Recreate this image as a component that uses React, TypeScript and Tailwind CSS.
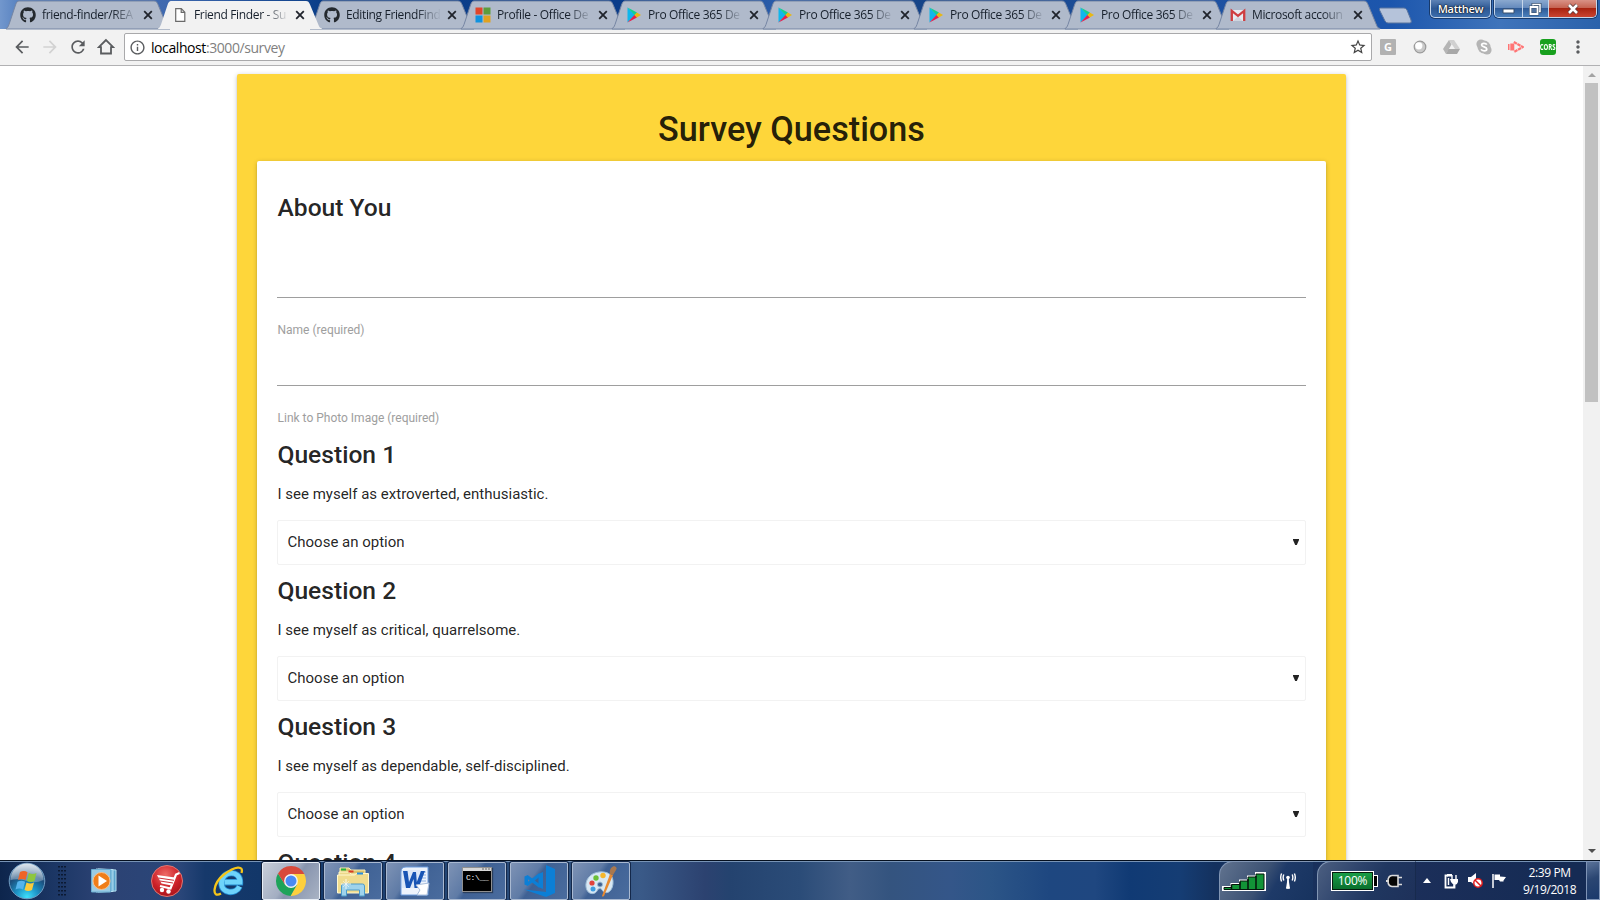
import { FaGithub } from "react-icons/fa";
import { MdArrowBack, MdArrowForward, MdRefresh, MdInfoOutline, MdStarBorder, MdMoreVert } from "react-icons/md";

type TabKind = "github" | "page" | "office" | "play" | "gmail";

type TabData = { kind: TabKind; title: string; active?: boolean; wide?: boolean };

const tabs: TabData[] = [
  { kind: "github", title: "friend-finder/REA", wide: true },
  { kind: "page", title: "Friend Finder - Su", active: true, wide: true },
  { kind: "github", title: "Editing FriendFind" },
  { kind: "office", title: "Profile - Office De" },
  { kind: "play", title: "Pro Office 365 De" },
  { kind: "play", title: "Pro Office 365 De" },
  { kind: "play", title: "Pro Office 365 De" },
  { kind: "play", title: "Pro Office 365 De" },
  { kind: "gmail", title: "Microsoft accoun" },
];

const questions = [
  "I see myself as extroverted, enthusiastic.",
  "I see myself as critical, quarrelsome.",
  "I see myself as dependable, self-disciplined.",
  "I see myself as anxious, easily upset.",
];

function Favicon({ kind }: { kind: TabKind }) {
  if (kind === "github") return <FaGithub className="size-4 shrink-0 text-[#24292e]" />;
  if (kind === "page")
    return (
      <svg viewBox="0 0 16 16" className="size-4 shrink-0">
        <path d="M3.7 1.7h5.6l3.5 3.5v9.1H3.7z M9.2 1.7v3.6h3.6" fill="#fff" stroke="#6a6a6a" strokeWidth="1.2" />
      </svg>
    );
  if (kind === "office")
    return (
      <svg viewBox="0 0 16 16" className="size-4 shrink-0">
        <path d="M.5.5h7v7h-7z" fill="#e0452a" />
        <path d="M8.5.5h7v7h-7z" fill="#5d9c3b" />
        <path d="M.5 8.5h7v7h-7z" fill="#1092df" />
        <path d="M8.5 8.5h7v7h-7z" fill="#e0a220" />
      </svg>
    );
  if (kind === "play")
    return (
      <svg viewBox="0 0 16 16" className="size-4 shrink-0">
        <path d="M1.5.5v15L9 8z" fill="#10b6ec" />
        <path d="M1.5.5 11 5.6 8.6 8.2z" fill="#12cf91" />
        <path d="M1.5 15.5 11 10.4 8.6 7.8z" fill="#e6204e" />
        <path d="M10.8 5.4 15 8l-4.2 2.6L8.4 8z" fill="#e8b813" />
      </svg>
    );
  return (
    <svg viewBox="0 0 16 16" className="size-4 shrink-0">
      <path d="M2 3h12v11H2z" fill="#e8ebf0" />
      <path d="M3 14 8 9.5 13 14z" fill="#cfd5de" />
      <path d="M1.8 14V3.8L8 8.8l6.200-5V14" fill="none" stroke="#cf3e40" strokeWidth="2.3" />
    </svg>
  );
}

function Tab({ kind, title, active, wide }: TabData) {
  return (
    <div className={`relative h-[29px] shrink-0 ${active ? "z-10" : ""} ${wide ? "w-[152px]" : "w-[151px]"}`}>
      <svg className="absolute left-0 top-0 h-[29px] w-[164px] overflow-visible" viewBox="0 0 164 29">
        <path
          d="M0 28.500C1.500 28 2 27 3 24.500L9.500 5C10.500 2 11.500 1 13 1H148C150 1 151 2 152 4.500L160.500 25C161.500 27.500 162 28 164 28.500V29H0z"
          fill={active ? "#f2f2f2" : "#b0bacb"}
          stroke={active ? "none" : "#7585a3"}
          strokeWidth="1"
        />
      </svg>
      <div className="relative flex h-[29px] items-center pl-[14px]">
        <Favicon kind={kind} />
        <div className="ml-[6px] w-[95px] whitespace-nowrap text-[12px] tracking-[-0.35px] text-[#17202c] mask-[linear-gradient(to_right,black_74%,transparent_100%)]">
          {title}
        </div>
        <svg viewBox="0 0 10 10" className="ml-[6px] size-[10px]">
          <path d="M1.200 1.200l7.600 7.600M8.800 1.200 1.200 8.800" stroke="#20242c" strokeWidth="1.800" />
        </svg>
      </div>
    </div>
  );
}

function TabStrip() {
  return (
    <div className="flex h-[29px] shrink-0 bg-[linear-gradient(90deg,#7297cd_0px,#5580bf_20px,#3f69af_165px,#0c3f89_320px,#093c8a_620px,#2b5daa_780px,#154488_920px,#1e51a0_1200px,#1c56ad_1390px,#3f74bb_1500px,#2a62ab_1600px)] pl-[6px]">
      {tabs.map((t, i) => (
        <Tab key={i} {...t} />
      ))}
      <svg className="ml-[11px] mt-[7px] h-[17px] w-[34px]" viewBox="0 0 34 17">
        <path d="M2.500 1H26q2 0 3 2l4 10q1 3-1 3H10q-2 0-3-2L1.500 3Q1 1 2.500 1z" fill="#b5c3da" stroke="#59749f" />
      </svg>
      <div className="ml-[18px] flex items-start">
        <div className="flex h-[18px] w-[61px] items-center justify-center rounded-b-[5px] border border-t-0 border-[#c6d6ea] bg-[linear-gradient(#5c82b5,#2d5893_50%,#3a6cac)] text-[11px] font-semibold leading-[18px] tracking-[-0.3px] text-white shadow-[0_0_0_1px_#173a6c] [text-shadow:0_0_2px_#000,0_0_1px_#000]">
          Matthew
        </div>
        <div className="ml-[3px] flex h-[18px] w-[103px] overflow-hidden rounded-b-[5px] border border-t-0 border-[#c6d6ea] shadow-[0_0_0_1px_#173a6c]">
          <div className="flex w-[28px] items-center justify-center border-r border-[#c6d6ea] bg-[linear-gradient(#8ba9cf,#6288bb_49%,#2f5b97_50%,#4b80bd)]">
            <svg viewBox="0 0 13 6" className="mt-1 h-[6px] w-[13px]"><path d="M1 1h11v4H1z" fill="#fff" stroke="#38506f" /></svg>
          </div>
          <div className="flex w-[26px] items-center justify-center border-r border-[#c6d6ea] bg-[linear-gradient(#8ba9cf,#6288bb_49%,#2f5b97_50%,#4b80bd)]">
            <svg viewBox="0 0 14 14" className="mr-[1px] size-[14px]">
              <path d="M5 2.500h7v7H5z" fill="#4f719f" stroke="#38506f" strokeWidth="3" />
              <path d="M5 2.500h7v7H5z" fill="none" stroke="#fff" strokeWidth="1.500" />
              <path d="M2.500 5h7v7h-7z" fill="#4f719f" stroke="#38506f" strokeWidth="3" />
              <path d="M2.500 5h7v7h-7z" fill="none" stroke="#fff" strokeWidth="1.800" />
            </svg>
          </div>
          <div className="flex flex-1 items-center justify-center bg-[linear-gradient(#d99286,#c4614f_48%,#a82310_50%,#c94430)]">
            <svg viewBox="0 0 12 12" className="size-[12px]">
              <path d="M2 2l8 8M10 2l-8 8" stroke="#5b3a3a" strokeWidth="4.200" />
              <path d="M2 2l8 8M10 2l-8 8" stroke="#fff" strokeWidth="2.600" />
            </svg>
          </div>
        </div>
      </div>
    </div>
  );
}

function Toolbar() {
  return (
    <div className="flex h-[37px] shrink-0 items-center border-b border-[#b1b1b3] bg-[#f2f2f2] text-[#5a5c5f]">
      <MdArrowBack className="ml-[12px] size-[20px]" />
      <MdArrowForward className="ml-[8px] size-[20px] text-[#d2d2d2]" />
      <MdRefresh className="ml-[8px] size-[20px]" />
      <svg viewBox="0 0 18 18" className="ml-[9px] size-[18px]">
        <path d="M9 2 1.800 9.200H4V15.500H14V9.200H16.200z" fill="none" stroke="#5a5c5f" strokeWidth="1.800" />
      </svg>
      <div className="ml-[9px] flex h-[28px] w-[1248px] items-center rounded-[2px] border border-[#a9a9ab] bg-white">
        <MdInfoOutline className="ml-[4px] size-[17px]" />
        <div className="ml-[5px] flex-1 text-[14px] tracking-[-0.42px] text-[#808080]">
          <span className="text-black">localhost</span>:3000/survey
        </div>
        <MdStarBorder className="mr-[4px] size-[18px] text-[#444]" />
      </div>
      <div className="ml-[8px] flex size-[16px] items-center justify-center rounded-[1px] bg-[#b2b2b2] text-[11px] font-bold text-white">G</div>
      <svg viewBox="0 0 14 14" className="ml-[17px] size-[14px]">
        <circle cx="7" cy="7" r="5.800" fill="#c9c9c9" stroke="#999" strokeWidth="1.200" />
        <circle cx="5.800" cy="5.800" r="3.600" fill="#fff" />
      </svg>
      <svg viewBox="0 0 17 14" className="ml-[16px] h-[14px] w-[17px]">
        <path d="M6 0h5l6 9h-5z" fill="#d0d0d0" />
        <path d="M6 0l2.500 4.500L3 14 0 9z" fill="#b5b5b5" />
        <path d="M5.500 9H17l-3 5H3z" fill="#a8a8a8" />
      </svg>
      <svg viewBox="0 0 16 16" className="ml-[16px] size-[16px]">
        <circle cx="5" cy="5" r="4.600" fill="#b5b5b5" />
        <circle cx="11" cy="11" r="4.600" fill="#b5b5b5" />
        <circle cx="8" cy="8" r="6.500" fill="#b5b5b5" />
        <path d="M10.800 5.600C10 4 5.600 3.800 5.600 6c0 2.300 5.200 1.500 5.200 4 0 2.400-4.800 2.400-5.700.2" fill="none" stroke="#fff" strokeWidth="1.700" />
      </svg>
      <svg viewBox="0 0 16 12" className="ml-[16px] h-[12px] w-[16px]">
        <path d="M0 3h1.500v6H0zM2.300 2.500h4v7h-4z" fill="#ff7474" />
        <path d="M5.800 1 14.800 6 5.800 11" fill="none" stroke="#ff7474" strokeWidth="2.200" strokeDasharray="3.500 .6" />
      </svg>
      <div className="ml-[16px] flex size-[16px] items-center justify-center rounded-[3px] bg-[#18a01e]">
        <span className="scale-x-75 text-[8px] font-bold text-white">CORS</span>
      </div>
      <MdMoreVert className="ml-[12px] size-[20px]" />
    </div>
  );
}

function Field({ label, first }: { label: string; first?: boolean }) {
  return (
    <div className={first ? "h-[104px]" : "h-[88px]"}>
      <div className={first ? "h-[61px] border-b border-[#9e9e9e]" : "h-[45px] border-b border-[#9e9e9e]"} />
      <div className="pl-[0.500px] pt-[23px] text-[12px] leading-[18px] text-[#9e9e9e]">{label}</div>
    </div>
  );
}

function Question({ n, text }: { n: number; text: string }) {
  return (
    <div className="h-[136px]">
      <h5 className="pl-[0.500px] pt-px text-[24.600px] font-medium leading-[27px]">Question {n}</h5>
      <p className="mt-[15px] pl-[0.500px] text-[15px] leading-[22px]">{text}</p>
      <div className="mt-[15px] flex h-[45px] items-center justify-between rounded-[2px] border border-[#f2f2f2] pl-[9.500px] pr-[6px] text-[15px]">
        <span>Choose an option</span>
        <svg viewBox="0 0 6 6" className="mb-[2px] size-[6px]"><path d="M0 0h6v1L3.800 6H2.200L0 1z" fill="#222" /></svg>
      </div>
    </div>
  );
}

function Page() {
  return (
    <div className="flex h-[794px] shrink-0 overflow-hidden bg-white">
      <div className="flex-1 overflow-hidden pl-[237px] pt-[8px] font-[Roboto,sans-serif] text-[rgba(0,0,0,0.87)]">
        <div className="h-[900px] w-[1109px] rounded-[2px] bg-[#fed63a] px-[20px] pt-[36px] shadow-[0_2px_2px_0_rgba(0,0,0,0.14),0_3px_1px_-2px_rgba(0,0,0,0.12),0_1px_5px_0_rgba(0,0,0,0.2)]">
          <h4 className="h-[51px] text-center text-[34.200px] font-medium leading-[38px]">Survey Questions</h4>
          <div className="h-[900px] rounded-[2px] bg-white px-[20px] pt-[33px] shadow-[0_2px_2px_0_rgba(0,0,0,0.14),0_3px_1px_-2px_rgba(0,0,0,0.12),0_1px_5px_0_rgba(0,0,0,0.2)]">
            <h5 className="h-[43px] pl-[0.500px] text-[24.600px] font-medium leading-[27px]">About You</h5>
            <Field label="Name (required)" first />
            <Field label="Link to Photo Image (required)" />
            <div className="pt-[11px]">
              {questions.map((q, i) => (
                <Question key={q} n={i + 1} text={q} />
              ))}
            </div>
          </div>
        </div>
      </div>
      <div className="flex w-[17px] flex-col items-center bg-[#f1f1f1]">
        <div className="flex h-[17px] items-center">
          <svg viewBox="0 0 8 4" className="h-[4px] w-[8px]"><path d="M0 4 4 0l4 4z" fill="#a3a3a3" /></svg>
        </div>
        <div className="h-[319px] w-[13px] bg-[#c1c1c1]" />
        <div className="mb-[7px] mt-auto">
          <svg viewBox="0 0 8 4" className="h-[4px] w-[8px]"><path d="M0 0h8L4 4z" fill="#505050" /></svg>
        </div>
      </div>
    </div>
  );
}

function StartOrb() {
  return (
    <svg viewBox="0 0 38 38" className="ml-[8px] size-[38px] shrink-0">
      <defs>
        <radialGradient id="orb" cx=".5" cy=".95" r=".9">
          <stop offset="0" stopColor="#3fe0fb" />
          <stop offset=".35" stopColor="#1d93c6" />
          <stop offset=".7" stopColor="#1c4d7c" />
          <stop offset="1" stopColor="#6f93b4" />
        </radialGradient>
        <linearGradient id="gloss" x1="0" y1="0" x2="0" y2="1">
          <stop offset="0" stopColor="#fff" stopOpacity=".75" />
          <stop offset="1" stopColor="#fff" stopOpacity=".25" />
        </linearGradient>
      </defs>
      <circle cx="19" cy="19" r="17.800" fill="url(#orb)" stroke="#6f9cc2" />
      <path d="M2.500 18A16.500 16.500 0 0 1 35.500 18Q27 22 19 19T2.500 18z" fill="url(#gloss)" />
      <path d="M12 10q4-2 7.500.2L17.500 18q-3.500-2-7.500 0z" fill="#ee6427" />
      <path d="M20.800 11q4 2 7.700 0L26.500 19q-4 2-7.600 0z" fill="#8dc63f" />
      <path d="M9.500 19.800q4-2 7.600 0L15 27.500q-3.500-2-7.500 0z" fill="#55b4ee" />
      <path d="M18.500 20.500q4 2 7.500 0L24 28q-4 2-7.500 0z" fill="#fccb3c" />
    </svg>
  );
}

function MediaIcon() {
  return (
    <svg viewBox="0 0 28 28" className="size-[28px]">
      <path d="M8 2l18 1v21l-18 1z" fill="#5aa4cc" stroke="#b4def0" />
      <path d="M6 2l17 .5v22L6 25z" fill="#7cbcdd" stroke="#b4def0" />
      <path d="M1.500 2.500h19v22.500h-19z" fill="#9bcbe4" stroke="#6baed2" />
      <circle cx="11.500" cy="14" r="8.500" fill="#f07d19" stroke="#f9c08a" />
      <path d="M8.500 8.500v11l8.500-5.500z" fill="#fff" />
    </svg>
  );
}

function CartIcon() {
  return (
    <svg viewBox="0 0 32 32" className="size-[32px]">
      <defs>
        <radialGradient id="cart" cx=".45" cy=".3" r=".75">
          <stop offset="0" stopColor="#ee6a66" />
          <stop offset=".6" stopColor="#cc2028" />
          <stop offset="1" stopColor="#a11218" />
        </radialGradient>
      </defs>
      <circle cx="16" cy="16" r="15.500" fill="url(#cart)" stroke="#de7773" />
      <path d="M6 10 24 12.500 20.500 20.500 10.500 18.500z" fill="#fff" />
      <path d="M28.500 8 25 9.500 19.500 23.500 9 21" fill="none" stroke="#fff" strokeWidth="2.200" />
      <path d="M7.500 13l15.500 2.300M9 16l13 2" stroke="#cc3038" strokeWidth="1" />
      <circle cx="11" cy="25" r="2.200" fill="#fff" />
      <circle cx="17.500" cy="26.500" r="2.200" fill="#fff" />
    </svg>
  );
}

function IeIcon() {
  return (
    <svg viewBox="0 0 32 32" className="size-[32px]">
      <path d="M26.500 21.500C23 29.500 8.500 29 8.500 18 8.500 5.500 27.500 4.500 27 17.200H11.500" fill="none" stroke="#2289cf" strokeWidth="6.400" />
      <path d="M26.500 21.500C23 29.500 8.500 29 8.500 18 8.500 5.500 27.500 4.500 27 17.200H11.500" fill="none" stroke="#6ed3fa" strokeWidth="4.800" />
      <path d="M8 28.500C-2 34 0 18 11 9.500 22 1 31 0 28.500 8" fill="none" stroke="#f5c519" strokeWidth="2.300" />
    </svg>
  );
}

function ChromeIcon() {
  return (
    <svg viewBox="0 0 32 32" className="size-[32px]">
      <path d="M16 9H29.300A15 15 0 0 1 15.500 31L22 19.500z" fill="#fdd03d" />
      <path d="M3 8.500A15 15 0 0 0 15.500 31L22 19.500 16 16 9.900 19.500z" fill="#1ea35a" />
      <path d="M3 8.500A15 15 0 0 1 29.300 9H16L10 19.500z" fill="#d84a3b" />
      <circle cx="16" cy="16" r="6.900" fill="#f3f3f3" />
      <circle cx="16" cy="16" r="5.500" fill="#4a8af4" />
    </svg>
  );
}

function FolderIcon() {
  return (
    <svg viewBox="0 0 34 32" className="h-[32px] w-[34px]">
      <path d="M4 3h9l2 2h14v20H4z" fill="#dcc36c" stroke="#f8eeb8" />
      <path d="M5 3.500h5v2H5z" fill="#27b33b" />
      <path d="M3 7h10l2 2h14v18H3z" fill="#ecd88a" stroke="#fff7c9" />
      <path d="M12.500 5.500h5v2h-5z" fill="#da3a25" />
      <path d="M1.500 10h17l2-1.500h12V28h-31z" fill="#f0dc8e" stroke="#fff8d0" />
      <path d="M21 7.500h6v2h-6z" fill="#258fe0" />
      <path d="M5.500 31V21q0-2 2-2h19q2 0 2 2v10h-5v-6h-13v6z" fill="#9fd3ec" stroke="#4c9bc9" />
      <path d="M10 14v10M5 19h10" stroke="#fff" strokeWidth=".8" />
      <path d="M7 16l6 6M13 16l-6 6" stroke="#fff" strokeWidth=".5" />
    </svg>
  );
}

function WordIcon() {
  return (
    <svg viewBox="0 0 30 30" className="size-[30px]">
      <path d="M6 1h22v28H1V6q0-5 5-5z" fill="#edf3fc" stroke="#6b9bde" />
      <path d="M16 6h10M16 9h10M16 12h10M16 15h10" stroke="#8fb2e2" />
      <path d="M2 4h18v18H2z" fill="#dce8f8" />
      <path d="M3 5h4.500l1.500 11L13 6h3l.8 10L21 5h4l-6.500 17h-4L13.500 13 10 22H6z" fill="#1855b5" />
      <path d="M16 19l13-2-2 12H17l3-5z" fill="#fff" stroke="#a9bedb" />
    </svg>
  );
}

function ConsoleIcon() {
  return (
    <div className="mt-[-2px] h-[25px] w-[30px] border border-[#8f8f8f] bg-black shadow-[1px_1px_1px_#2b3f5c]">
      <div className="flex h-[3px] justify-end bg-[#d7d7d7] pr-px">
        <svg viewBox="0 0 8 3" className="h-[3px] w-[8px]"><path d="M0 1h2M3 1h2M6 1h2" stroke="#666" /></svg>
      </div>
      <div className="pl-[3px] pt-[2px] font-['Liberation_Mono',monospace] text-[8px] leading-[9px] tracking-[-0.300px] text-white">C:\__</div>
    </div>
  );
}

function CodeIcon() {
  return (
    <svg viewBox="0 0 34 34" className="size-[34px]">
      <path d="M24 1l9 4v24l-9 4L2 25.500 24 28z" fill="#0c7fd6" />
      <path d="M18 10.500 5 20.500M5 12.500 18 22.500" stroke="#0c7fd6" strokeWidth="3.200" />
      <path d="M2.500 12.500 6 11v11l-3.500-1.500z" fill="#0c7fd6" />
      <path d="M16.500 10 21 8v17l-4.500-2z" fill="#0c7fd6" />
    </svg>
  );
}

function PaintIcon() {
  return (
    <svg viewBox="0 0 32 32" className="size-[32px]">
      <path d="M14 7C5 8 0 15 1 22c1 8 9 8 11 4 1-3 4-3 5-1 3 5 10 3 11-6C29 10 23 6 14 7zM15 17a2.500 2.500 0 1 1 0 5 2.500 2.500 0 0 1 0-5z" fill="#d8e8f4" stroke="#9dbdd8" fillRule="evenodd" />
      <circle cx="11" cy="13" r="2.700" fill="#6abf37" />
      <circle cx="18" cy="10.500" r="2.700" fill="#f5b62c" />
      <circle cx="7" cy="18" r="2.600" fill="#e0433d" />
      <circle cx="8" cy="24" r="2.500" fill="#3f9de0" />
      <path d="M17 31 25 9l3 1-9 21q-2 1-2 0z" fill="#e88a31" />
      <path d="M25 9q-1-6 4-8 4 1 2 4l-3 5z" fill="#a87850" />
    </svg>
  );
}

const running = [FolderIcon, WordIcon, ConsoleIcon, CodeIcon, PaintIcon];

function TaskButton({ icon: Icon, active }: { icon: () => React.JSX.Element; active?: boolean }) {
  return (
    <div
      className={
        active
          ? "flex h-[38px] w-[58px] shrink-0 items-center justify-center rounded-[2px] border border-[#e7edf5] bg-[linear-gradient(125deg,#c8ced9_0%,#a3aec2_45%,#8794ae_55%,#a9b3c4_100%)] shadow-[0_0_0_1px_#101e38]"
          : "flex h-[38px] w-[58px] shrink-0 items-center justify-center rounded-[2px] border border-[#a9b9d1] bg-[linear-gradient(125deg,#7e93b5_0%,#5f7ba6_38%,#3f6194_46%,#4a6c9e_100%)] shadow-[0_0_0_1px_#14284a]"
      }
    >
      <Icon />
    </div>
  );
}

function Tray() {
  return (
    <div className="ml-auto flex h-[39px] text-white">
      <div className="flex w-[94px] items-center rounded-tl-[14px] border-l border-t border-[#8296b4] bg-[linear-gradient(120deg,#61738f_0%,#3b5173_45%,#1e3a68_60%,#17335f_100%)]">
        <svg viewBox="0 0 44 19" className="ml-[2px] mt-[1px] h-[19px] w-[44px]">
          <path d="M1 18v-3h8.500v-3h8.500V8.500h8V4.500h8V1h9v17z" fill="#15963a" stroke="#fff" strokeWidth="2" />
          <path d="M2 17.500v-2h7.500v-3h8.500v-3.500h8v-4h8V2h8v15.500z" fill="#129337" stroke="#04150b" />
          <path d="M9.500 13v5M18 10v8M26 7v11M34 4v14" stroke="#04150b" strokeWidth="1.500" />
        </svg>
        <svg viewBox="0 0 16 16" className="ml-[14px] size-[16px]">
          <circle cx="8" cy="4.500" r="1.800" fill="#fff" />
          <path d="M8 5v10M6.500 15h3M3.800 1.500Q2.500 4.500 3.800 7.500M12.200 1.500Q13.500 4.500 12.200 7.500M1.600.5Q-.2 4.500 1.600 8.500M14.400.5q1.800 4 0 8" fill="none" stroke="#fff" strokeWidth="1.400" />
          <path d="M7.500 6h1l1.500 9.500H6z" fill="#fff" />
        </svg>
      </div>
      <div className="ml-[4px] flex w-[99px] items-center rounded-tl-[14px] border-l border-t border-[#8296b4] border-r border-r-[#172a4d] bg-[linear-gradient(120deg,#4c5f81_0%,#2c426b_40%,#203760_60%,#1e315a_100%)]">
        <div className="ml-[13px] flex h-[20px] w-[43px] items-center justify-center border border-white bg-[linear-gradient(#19a048,#0a6d2c)] text-[12px] tracking-[-0.200px] shadow-[inset_0_0_0_1px_#051c0d]">100%</div>
        <div className="h-[12px] w-[4px] border border-l-0 border-white bg-black" />
        <svg viewBox="0 0 18 14" className="ml-[8px] h-[14px] w-[18px]">
          <path d="M6 1.500h6v2h4M12 10.500h4M12 3.500v7h-0v2H6Q2 12 2 7t4-5.500" fill="#050505" stroke="#dadada" strokeWidth="1.600" />
          <path d="M0 7h3" stroke="#dadada" strokeWidth="2" />
        </svg>
      </div>
      <div className="flex w-[170px] items-center">
        <svg viewBox="0 0 8 5" className="ml-[7px] h-[5px] w-[8px]"><path d="M0 5 4 0l4 5z" fill="#fff" /></svg>
        <svg viewBox="0 0 14 16" className="ml-[13px] h-[16px] w-[14px]">
          <path d="M4 2.500H1.500v12h9V12" fill="none" stroke="#fff" strokeWidth="1.800" />
          <path d="M3 1h5v2.500H3zM6 6h8v3q-1 3-3 3t-4-3z" fill="#fff" />
          <path d="M8 2v4M12 2v4M10 11v4M4.500 5v7" stroke="#fff" strokeWidth="1.400" />
        </svg>
        <svg viewBox="0 0 15 15" className="ml-[10px] size-[15px]">
          <path d="M0 4h3l5-4v13l-5-4H0z" fill="#fff" />
          <circle cx="10" cy="10" r="4.200" fill="#fff" stroke="#df1c1c" strokeWidth="1.500" />
          <path d="M7 7l6 6" stroke="#df1c1c" strokeWidth="1.500" />
        </svg>
        <svg viewBox="0 0 15 15" className="ml-[9px] size-[15px]">
          <path d="M1 1v14" stroke="#fff" strokeWidth="1.500" />
          <path d="M2.500 1.500H8v2l6 .5-2.500 3.500v1H8l-1-1.500H2.500z" fill="#fff" />
        </svg>
        <div className="ml-[16px] flex flex-col items-center text-[12px] leading-[17px] tracking-[-0.400px]">
          <span>2:39 PM</span>
          <span>9/19/2018</span>
        </div>
      </div>
      <div className="h-[39px] w-[14px] border border-[#7f94b6] bg-[linear-gradient(160deg,#5b7399,#2b4672_45%,#1b3a6c)]" />
    </div>
  );
}

function Taskbar() {
  return (
    <div className="flex h-[40px] shrink-0 items-center border-t border-[#05101f] bg-[linear-gradient(90deg,#0d254c_0px,#1d3867_60px,#2c4273_100px,#2a4679_180px,#16396b_205px,#123769_260px,#30527f_600px,#3a5a88_640px,#2c4270_705px,#24436f_730px,#2b4c78_800px,#415d86_850px,#34547f_890px,#345689_950px,#2c5587_990px,#1e4780_1050px,#1f4780_1095px,#103a74_1130px,#153d74_1180px,#14315e_1215px,#1c2f5a_1400px,#152b54_1560px)] shadow-[inset_0_1px_0_#7793b5]">
      <StartOrb />
      <svg viewBox="0 0 8 30" className="ml-[12px] h-[30px] w-[8px] shrink-0">
        <path d="M1 0v30M4 0v30M7 0v30" stroke="#081327" strokeWidth="1.600" strokeDasharray="1.600 2.400" />
      </svg>
      <div className="ml-[24px]"><MediaIcon /></div>
      <div className="ml-[33px]"><CartIcon /></div>
      <div className="ml-[30px]"><IeIcon /></div>
      <div className="ml-[17px] flex gap-[4px]">
        <TaskButton icon={ChromeIcon} active />
        {running.map((icon, i) => (
          <TaskButton key={i} icon={icon} />
        ))}
      </div>
      <Tray />
    </div>
  );
}

export default function App() {
  return (
    <div className="flex h-[900px] w-[1600px] flex-col overflow-hidden bg-white font-['Open_Sans','Noto_Sans',sans-serif]">
      <TabStrip />
      <Toolbar />
      <Page />
      <Taskbar />
    </div>
  );
}
